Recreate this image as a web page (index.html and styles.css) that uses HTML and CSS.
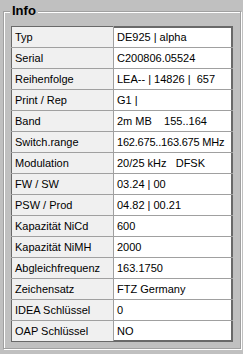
FILE: index.html
```html
<!DOCTYPE html>
<html lang="de">
  <head>
    <meta charset="UTF-8" />
    <title>Info</title>
    <link rel="stylesheet" href="styles.css">
  </head>
  <body>
    <div class="group">
      <div class="group-title">Info</div>

      <!-- Geräteinformationen -->
      <table class="info-grid">
        <tr><td class="key">Typ</td><td class="val">DE925 | alpha</td></tr>
        <tr><td class="key">Serial</td><td class="val">C200806.05524</td></tr>
        <tr><td class="key">Reihenfolge</td><td class="val">LEA-- | 14826 |&nbsp; 657</td></tr>
        <tr><td class="key">Print / Rep</td><td class="val">G1 |</td></tr>
        <tr><td class="key">Band</td><td class="val">2m MB&nbsp;&nbsp;&nbsp; 155..164</td></tr>
        <tr><td class="key">Switch.range</td><td class="val range">162.675..163.675 MHz</td></tr>
        <tr><td class="key">Modulation</td><td class="val">20/25 kHz&nbsp;&nbsp; DFSK</td></tr>
        <tr><td class="key">FW / SW</td><td class="val">03.24 | 00</td></tr>
        <tr><td class="key">PSW / Prod</td><td class="val">04.82 | 00.21</td></tr>
        <tr><td class="key">Kapazität NiCd</td><td class="val">600</td></tr>
        <tr><td class="key">Kapazität NiMH</td><td class="val">2000</td></tr>
        <tr><td class="key">Abgleichfrequenz</td><td class="val">163.1750</td></tr>
        <tr><td class="key">Zeichensatz</td><td class="val">FTZ Germany</td></tr>
        <tr><td class="key">IDEA Schlüssel</td><td class="val">0</td></tr>
        <tr><td class="key">OAP Schlüssel</td><td class="val">NO</td></tr>
      </table>
    </div>
  </body>
</html>
```

FILE: styles.css
```css
body {
  background-color: #c0c0c0;
  font-family: "Liberation Sans", Arial, sans-serif;
  font-size: 11px;
  margin: 0;
  padding: 11px 2px 5px 3px;
}

/* Rahmen mit Gravur (grau + weiß) */
.group {
  border: 1px solid #a0a0a0;
  box-shadow: inset 1px 1px 0 #fff, 1px 1px 0 #fff;
  padding: 0 7px 6px 7px;
}

.group-title {
  display: inline-block;
  margin: -9px 0 0 -1px;
  padding: 0 2px 0 2px;
  background-color: #c0c0c0;
  font-size: 13px;
  font-weight: bold;
  line-height: 16px;
  vertical-align: top;
}

.info-grid {
  width: 222px;
  margin-top: 2px;
  border-collapse: collapse;
  border: 1px solid #a0a0a0;
  box-shadow: inset 0 0 0 1px #696969;
  background-color: #fff;
}

.info-grid td {
  height: 20px;
  padding: 0 0 0 3px;
  border-bottom: 1px solid #a0a0a0;
  white-space: nowrap;
  line-height: 20px;
}

.info-grid tr:first-child td {
  border-top: 1px solid #696969;
}

.info-grid tr:last-child td {
  border-bottom: 1px solid #696969;
}

.key {
  width: 98px;
  background-color: #f0f0f0;
  border-left: 1px solid #696969;
  border-right: 1px solid #a0a0a0;
}

.val {
  border-right: 1px solid #696969;
}

.range {
  padding-left: 4px;
  letter-spacing: -0.2px;
}
```
